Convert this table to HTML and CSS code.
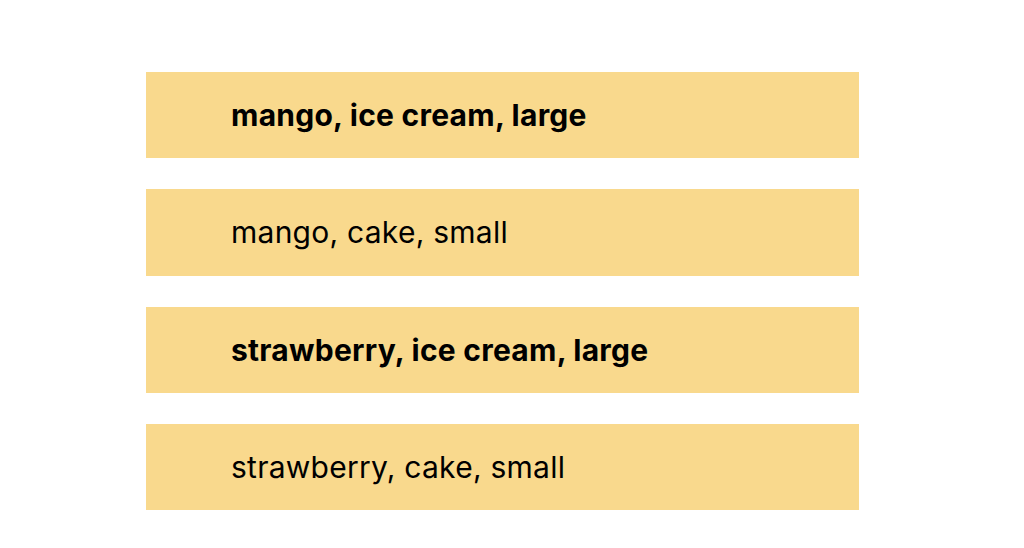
FILE: index.html
```html
<!DOCTYPE html>
<html>
<head>
<meta charset="utf-8">
<link rel="stylesheet" href="styles.css">
</head>
<body>
<div class="list">
  <div class="item bold">mango, ice cream, large</div>
  <div class="item">mango, cake, small</div>
  <div class="item bold">strawberry, ice cream, large</div>
  <div class="item">strawberry, cake, small</div>
</div>
</body>
</html>
```
FILE: styles.css
```css
html, body {
  margin: 0;
  padding: 0;
  background: #ffffff;
}
body {
  font-family: Inter, "Noto Sans", sans-serif;
  color: #000;
}
.list {
  display: flex;
  flex-direction: column;
  gap: 31px;
  width: 713px;
  margin-left: 146px;
  padding-top: 72px;
}
.item {
  height: 86.3px;
  background: #f9d98d;
  display: flex;
  align-items: center;
  padding-left: 85px;
  font-size: 30px;
  letter-spacing: 0.25px;
  font-weight: 400;
  box-sizing: border-box;
}
.item.bold {
  font-weight: 700;
}
```
